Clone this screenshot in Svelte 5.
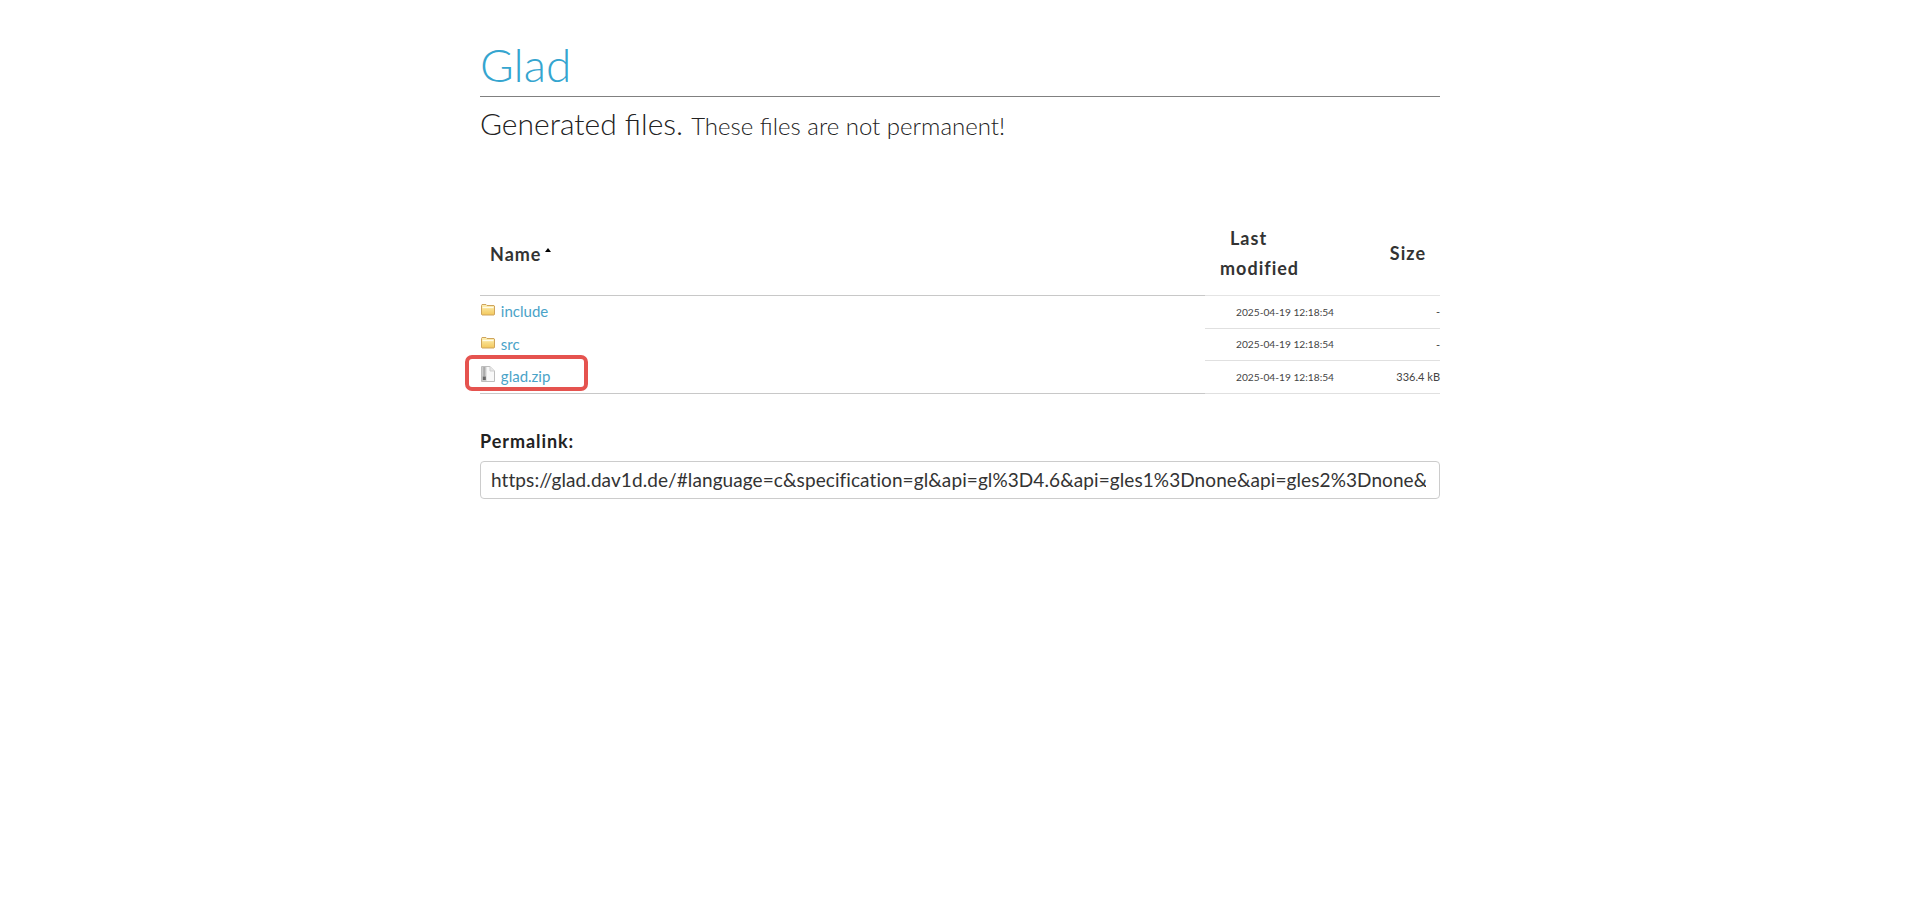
<script>
  const rows = [
    { name: 'include', kind: 'dir', size: '-' },
    { name: 'src', kind: 'dir', size: '-' },
    { name: 'glad.zip', kind: 'zip', size: '336.4 kB' }
  ];
  const permalink = 'https://glad.dav1d.de/#language=c&specification=gl&api=gl%3D4.6&api=gles1%3Dnone&api=gles2%3Dnone&api=glsc2%3Dnone&profile=compatibility&loader=on';
</script>

<main class="container">
  <header class="page-title">
    <h1><a href="#top">Glad</a></h1>
  </header>
  <h2>Generated files. <small>These files are not permanent!</small></h2>

  <table>
    <thead>
      <tr>
        <th class="name-head"><span class="sortable">Name<span class="sort"></span></span></th>
        <th class="date-head"><span class="last">Last</span> modified</th>
        <th class="size-head">Size</th>
      </tr>
    </thead>
    <tbody>
      {#each rows as row}
        <tr>
          <td class="name">
            {#if row.kind === 'dir'}
              <svg class="icon folder" viewBox="0 0 16 16" width="16" height="16" aria-hidden="true">
                <defs>
                  <linearGradient id="fold" x1="0" y1="0" x2="0" y2="1">
                    <stop offset="0" stop-color="#fdf0b4" />
                    <stop offset="1" stop-color="#f3c85c" />
                  </linearGradient>
                </defs>
                <path d="M1.5 3.5 L2 2.5 H6 L7 3.5 H14 L14.5 4 V12.5 L14 13 H2 L1.5 12.5 Z" fill="url(#fold)" stroke="#cfa45c" stroke-width="1" />
                <path d="M2.5 5.5 H13.5" stroke="#fffbe8" stroke-width="1.3" />
              </svg>
            {:else}
              <svg class="icon zip" viewBox="0 0 16 16" width="16" height="16" aria-hidden="true">
                <path d="M1.5 .5 H10 L14.5 5 V15.5 H1.5 Z" fill="#f8f8f8" stroke="#bdbdbd" />
                <path d="M10 .5 V5 H14.5" fill="#e8e8e8" stroke="#cfcfcf" />
                <rect x="2" y="1" width="4.5" height="14" fill="#cdcdcd" />
                <path d="M4.2 1.5 V10" stroke="#8a8a8a" stroke-width="2" stroke-dasharray="1 1" />
                <rect x="2.8" y="10.5" width="3" height="3.5" fill="#666" />
              </svg>
            {/if}
            <a href="#top">{row.name}</a>
          </td>
          <td class="date">2025-04-19 12:18:54</td>
          <td class="size">{row.size}</td>
        </tr>
      {/each}
    </tbody>
  </table>

  <label for="permalink">Permalink:</label>
  <input id="permalink" type="text" readonly value={permalink} />

  <div class="annotation"></div>
</main>

<style>
  :global(body) {
    margin: 0;
    background: #fff;
    font-family: Lato, "Open Sans", sans-serif;
    color: #222;
  }
  .container {
    position: relative;
    width: 960px;
    margin: 0 auto;
    padding-top: 37px;
  }
  .page-title {
    border-bottom: 1px solid #808080;
    height: 59px;
  }
  h1 {
    margin: 0;
    font-size: 46px;
    line-height: 56px;
    font-weight: 300;
  }
  h1 a {
    color: #35a5cf;
    text-decoration: none;
  }
  h2 {
    margin: 8px 0 0;
    font-size: 30px;
    line-height: 36px;
    font-weight: 300;
    color: #222;
  }
  small {
    font-size: 24px;
    color: #222;
  }
  table {
    width: 960px;
    margin-top: 66px;
    border-collapse: collapse;
    table-layout: fixed;
  }
  th {
    height: 85px;
    padding: 2px 10px 0;
    box-sizing: border-box;
    font-size: 18px;
    line-height: 30px;
    font-weight: 700;
    letter-spacing: 1px;
    color: #333;
  }
  .name-head {
    width: 725px;
    text-align: left;
    border-bottom: 1px solid #c8c8c8;
  }
  .sortable {
    display: inline-block;
    margin-top: 2px;
  }
  .sort {
    display: inline-block;
    width: 0;
    height: 0;
    margin-left: 4px;
    vertical-align: 9px;
    border-left: 3px solid transparent;
    border-right: 3px solid transparent;
    border-bottom: 4px solid #000;
  }
  .date-head {
    width: 160px;
    padding: 2px 45px 0 15px;
    text-align: left;
    border-bottom: 1px solid #e4e4e4;
  }
  .last {
    margin-left: 10px;
  }
  .size-head {
    border-bottom: 1px solid #e4e4e4;
    text-align: right;
    padding-right: 14px;
  }
  td {
    height: 33px;
    padding: 0;
    box-sizing: border-box;
  }
  tbody tr:nth-child(2) td {
    height: 32px;
  }
  tbody tr:last-child td.name {
    border-bottom: 1px solid #c8c8c8;
  }
  td.date, td.size {
    border-bottom: 1px solid #e0e0e0;
    font-size: 11px;
    color: #444;
  }
  td.date {
    font-size: 10.2px;
    text-align: center;
  }
  td.size {
    text-align: right;
  }
  .name {
    padding-bottom: 1px;
    font-size: 15px;
  }
  .name a {
    color: #4aa3c8;
    text-decoration: none;
  }
  .icon {
    margin-right: 1px;
  }
  .folder {
    vertical-align: -1px;
  }
  .zip {
    vertical-align: 0;
  }
  label {
    display: block;
    margin-top: 34px;
    font-size: 18px;
    line-height: 26px;
    font-weight: 700;
    letter-spacing: 0.95px;
    color: #222;
  }
  input {
    display: block;
    width: 100%;
    box-sizing: border-box;
    height: 38px;
    margin-top: 7px;
    padding: 0 13px 0 10px;
    border: 1px solid #ccc;
    border-radius: 4px;
    font-family: inherit;
    font-size: 19px;
    letter-spacing: 0.085px;
    color: #333;
    background: #fff;
    outline: none;
  }
  .annotation {
    position: absolute;
    left: -15px;
    top: 355px;
    width: 123px;
    height: 36px;
    box-sizing: border-box;
    border: 4px solid #e5534f;
    border-radius: 7px;
  }
</style>
